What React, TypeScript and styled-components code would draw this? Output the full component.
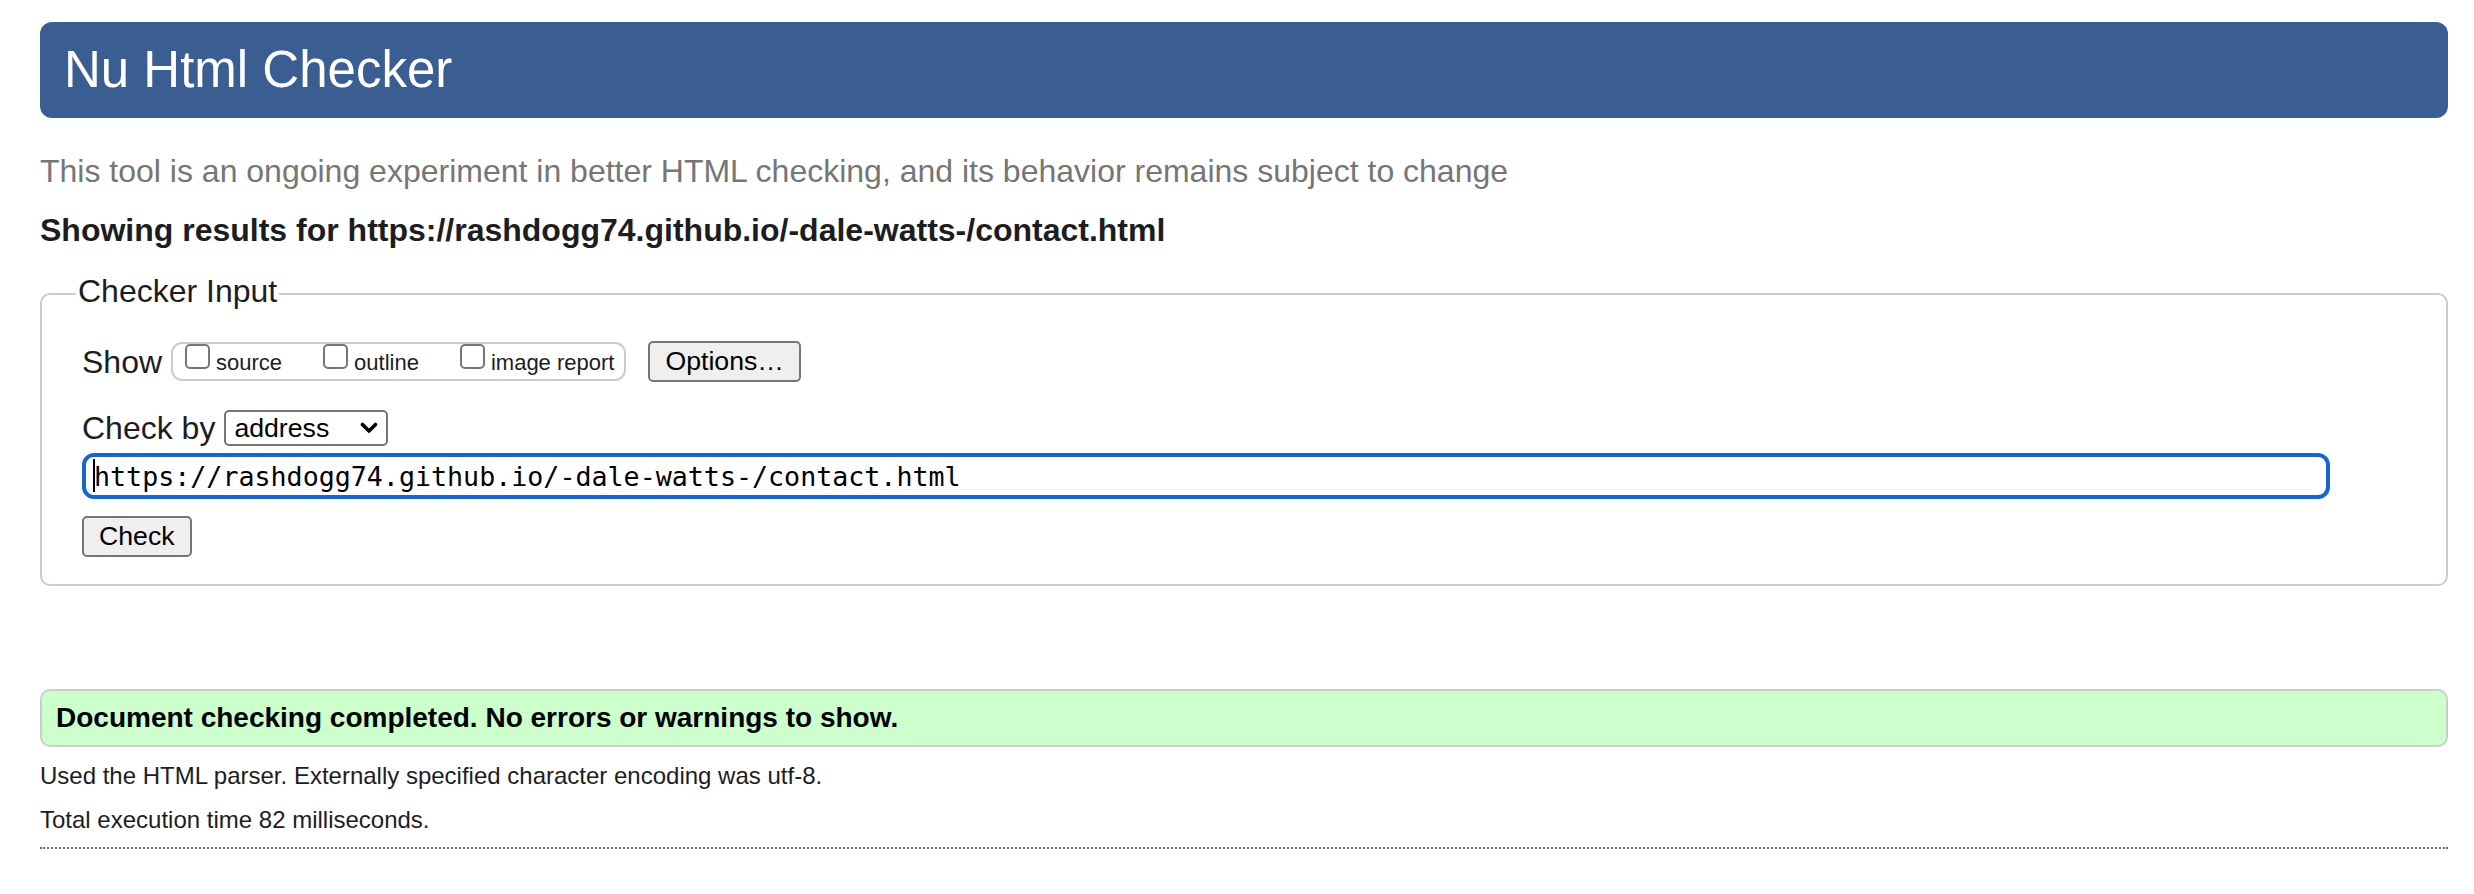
import React from "react";
import styled, { createGlobalStyle } from "styled-components";

const Global = createGlobalStyle`
  html, body {
    margin: 0;
    padding: 0;
    background: #ffffff;
  }
  body {
    font-family: "Liberation Sans", Arial, Helvetica, sans-serif;
    color: #222222;
  }
  * { box-sizing: border-box; }
`;

const Page = styled.div`
  padding: 22px 26px 40px 40px;
  display: flex;
  flex-direction: column;
`;

const Banner = styled.h1`
  margin: 0;
  height: 96px;
  padding: 0 24px;
  background: #3a5d92;
  color: #ffffff;
  border-radius: 12px;
  font-size: 51px;
  font-weight: normal;
  line-height: 96px;
`;

const About = styled.p`
  margin: 29px 0 0 0;
  font-size: 32px;
  line-height: 48px;
  color: #767676;
`;

const ResultsFor = styled.h2`
  margin: 11px 0 0 0;
  font-size: 32px;
  line-height: 48px;
  font-weight: bold;
  color: #1d1d1f;
`;

const Fieldset = styled.fieldset`
  margin: 18px 0 0 0;
  padding: 25px 40px 27px 40px;
  border: 2px solid #cccccc;
  border-radius: 10px;
  display: flex;
  flex-direction: column;
  min-width: 0;
`;

const Legend = styled.legend`
  font-size: 32px;
  line-height: 38px;
  padding: 0 2px 6px 2px;
  margin-left: -6px;
  color: #1d1d1f;
`;

const Row = styled.div<{ $top?: number }>`
  display: flex;
  align-items: center;
  margin-top: ${(p) => p.$top ?? 0}px;
`;

const FieldLabel = styled.span`
  font-size: 32px;
  line-height: 38px;
  margin-right: 9px;
  color: #1d1d1f;
`;

const OptionGroup = styled.div`
  display: flex;
  align-items: flex-start;
  height: 39px;
  padding: 0 10px 0 12px;
  border: 2px solid #cccccc;
  border-radius: 11px;
  margin-right: 22px;
`;

const OptionItem = styled.label<{ $last?: boolean }>`
  display: flex;
  align-items: flex-start;
  margin-right: ${(p) => (p.$last ? 0 : 41)}px;
`;

const Box = styled.span`
  display: block;
  width: 25px;
  height: 25px;
  border: 2px solid #767676;
  border-radius: 5px;
  background: #ffffff;
`;

const OptionText = styled.span`
  font-size: 22px;
  line-height: 24px;
  margin: 7px 0 0 6px;
  color: #1d1d1f;
`;

const Button = styled.button`
  font-family: "Liberation Sans", Arial, Helvetica, sans-serif;
  font-size: 26.67px;
  line-height: 31px;
  height: 41px;
  padding: 0 15px;
  background: #efefef;
  color: #000000;
  border: 2px solid #767676;
  border-radius: 5px;
`;

const SelectBox = styled.div`
  display: flex;
  align-items: center;
  justify-content: space-between;
  width: 164px;
  height: 36px;
  padding: 0 8px 0 8px;
  border: 2px solid #767676;
  border-radius: 5px;
  background: #ffffff;
  font-size: 26.67px;
  color: #000000;
`;

const Chevron = styled.svg`
  width: 18px;
  height: 14px;
  display: block;
`;

const UrlWrap = styled.div`
  position: relative;
  margin-top: 6px;
  width: 2248px;
`;

const UrlInput = styled.input`
  display: block;
  width: 100%;
  height: 46px;
  padding: 0 8px 0 8px;
  border: 4px solid #1766cc;
  border-radius: 12px;
  outline: none;
  font-family: "DejaVu Sans Mono", "Liberation Mono", monospace;
  font-size: 26.67px;
  color: #000000;
  background: #ffffff;
  caret-color: transparent;
`;

const Caret = styled.span`
  position: absolute;
  left: 11px;
  top: 6px;
  width: 2px;
  height: 33px;
  background: #000000;
`;

const CheckRow = styled.div`
  margin-top: 17px;
  display: flex;
`;

const Success = styled.div`
  margin-top: 103px;
  height: 58px;
  padding: 0 14px;
  border: 2px solid #cccccc;
  border-radius: 10px;
  background: #ccffcc;
  font-size: 28px;
  font-weight: bold;
  line-height: 54px;
  color: #000000;
`;

const Detail = styled.p<{ $top: number }>`
  margin: ${(p) => p.$top}px 0 0 0;
  font-size: 24px;
  line-height: 36px;
  color: #1d1d1f;
`;

const Rule = styled.hr`
  margin: 9px 0 0 0;
  border: none;
  border-top: 2px dotted #6b6b6b;
  height: 0;
`;

const options = [
  { id: "showsource", text: "source" },
  { id: "showoutline", text: "outline" },
  { id: "showimagereport", text: "image report" },
];

export default function App() {
  const url = "https://rashdogg74.github.io/-dale-watts-/contact.html";
  return (
    <>
      <Global />
      <Page>
        <Banner>Nu Html Checker</Banner>
        <About>
          This tool is an ongoing experiment in better HTML checking, and its
          behavior remains subject to change
        </About>
        <ResultsFor>Showing results for {url}</ResultsFor>
        <Fieldset>
          <Legend>Checker Input</Legend>
          <Row>
            <FieldLabel>Show</FieldLabel>
            <OptionGroup>
              {options.map((o, i) => (
                <OptionItem key={o.id} $last={i === options.length - 1}>
                  <Box />
                  <OptionText>{o.text}</OptionText>
                </OptionItem>
              ))}
            </OptionGroup>
            <Button type="button">Options…</Button>
          </Row>
          <Row $top={27}>
            <FieldLabel>Check by</FieldLabel>
            <SelectBox>
              <span>address</span>
              <Chevron viewBox="0 0 18 14">
                <path
                  d="M2.5 3.5 L9 10 L15.5 3.5"
                  fill="none"
                  stroke="#000"
                  strokeWidth="3.6"
                  strokeLinecap="round"
                  strokeLinejoin="round"
                />
              </Chevron>
            </SelectBox>
          </Row>
          <UrlWrap>
            <UrlInput type="url" readOnly value={url} />
            <Caret />
          </UrlWrap>
          <CheckRow>
            <Button type="button">Check</Button>
          </CheckRow>
        </Fieldset>
        <Success>Document checking completed. No errors or warnings to show.</Success>
        <Detail $top={11}>
          Used the HTML parser. Externally specified character encoding was utf-8.
        </Detail>
        <Detail $top={8}>Total execution time 82 milliseconds.</Detail>
        <Rule />
      </Page>
    </>
  );
}
